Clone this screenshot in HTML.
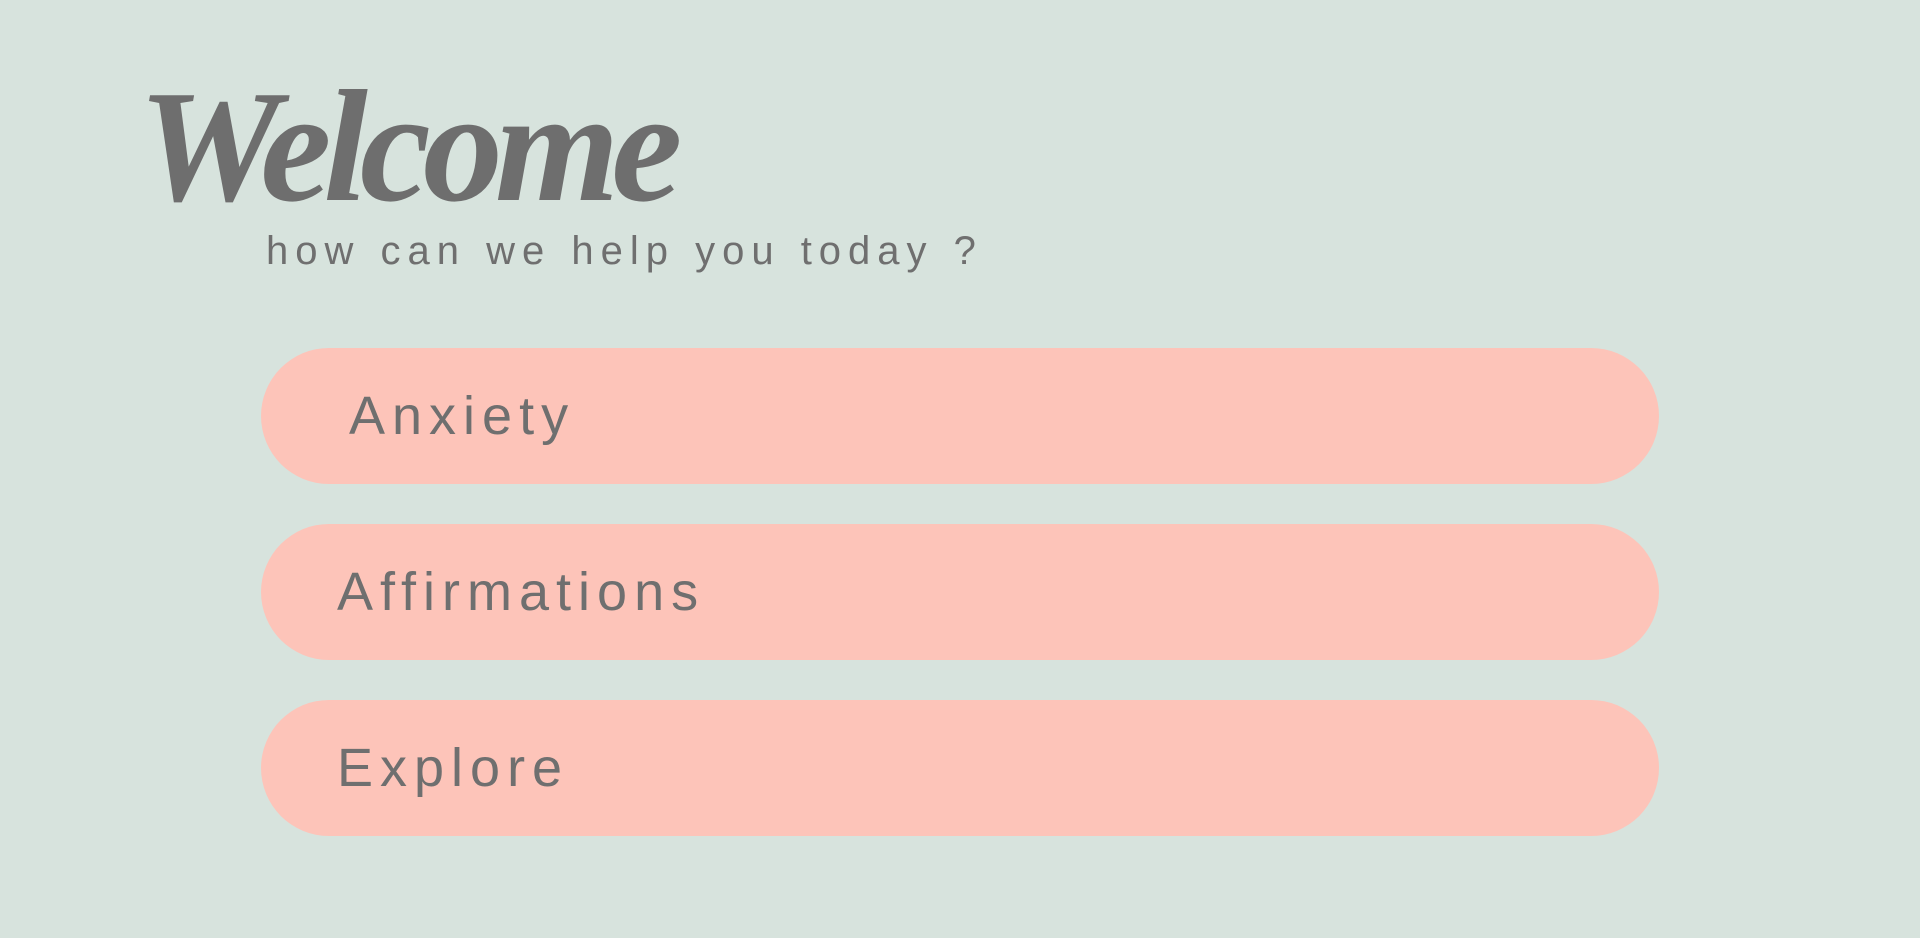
<!DOCTYPE html>
<html><head><meta charset="utf-8"><style>
html,body{margin:0;padding:0;width:1920px;height:938px;background:#d7e3dd;overflow:hidden;font-family:"Liberation Sans","DejaVu Sans",sans-serif;color:#6f6f6f}
.w{position:absolute;left:138px;top:66px;font-family:"Liberation Serif",serif;font-style:italic;font-weight:bold;font-size:160px;line-height:160px;letter-spacing:-8px;color:#6e6e6e}
.s{position:absolute;left:266px;top:226px;font-size:40px;line-height:50px;letter-spacing:7px;word-spacing:2px}
.b{position:absolute;left:261px;width:1398px;height:136px;border-radius:68px;background:#fdc4b9;font-size:54px;line-height:136px;letter-spacing:7px}
</style></head><body>
<div class="w">Welcome</div>
<div class="s">how can we help you today ?</div>
<div class="b" style="top:348px"><span style="position:absolute;left:88px">Anxiety</span></div>
<div class="b" style="top:524px"><span style="position:absolute;left:76px">Affirmations</span></div>
<div class="b" style="top:700px"><span style="position:absolute;left:76px">Explore</span></div>
</body></html>
